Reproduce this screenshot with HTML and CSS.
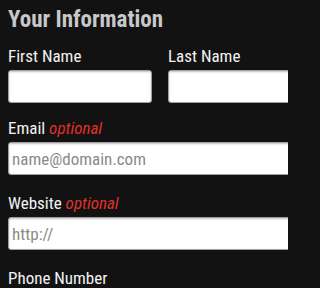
FILE: index.html
```html
<!DOCTYPE html>
<html>
<head>
<meta charset="utf-8">
<link rel="stylesheet" href="styles.css">
</head>
<body>
<div class="page">
<form class="form">
  <h2 class="title">Your Information</h2>
  <div class="row">
    <div class="field">
      <label class="label">First Name</label>
      <input class="input" type="text">
    </div>
    <div class="field">
      <label class="label">Last Name</label>
      <input class="input" type="text">
    </div>
  </div>
  <div class="field field-wide field-first">
    <label class="label">Email <span class="opt">optional</span></label>
    <input class="input" type="text" placeholder="name@domain.com">
  </div>
  <div class="field field-wide">
    <label class="label">Website <span class="opt">optional</span></label>
    <input class="input" type="text" placeholder="http://">
  </div>
  <div class="field field-wide">
    <label class="label">Phone Number</label>
  </div>
</form>
</div>
</body>
</html>
```
FILE: styles.css
```css
html, body {
  margin: 0;
  padding: 0;
  background: #121212;
}
.page {
  width: 288px;
  height: 288px;
  overflow: hidden;
}
.form {
  padding: 6px 0 0 8px;
  width: 320px;
  font-family: Roboto, sans-serif;
  font-stretch: condensed;
}
.title {
  margin: 0;
  font-size: 23px;
  line-height: 28px;
  font-weight: 700;
  color: #c8c8c8;
  white-space: nowrap;
}
.row {
  display: flex;
  gap: 16px;
  margin-top: 12px;
}
.field {
  display: flex;
  flex-direction: column;
  gap: 4px;
}
.row .field {
  width: 144px;
}
.field-wide {
  width: 310px;
  margin-top: 18px;
}
.field-first {
  margin-top: 15px;
}
.label {
  font-size: 17px;
  line-height: 20px;
  color: #f2f2f2;
  white-space: nowrap;
}
.opt {
  color: #e0302a;
  font-style: italic;
}
.input {
  box-sizing: border-box;
  height: 33px;
  width: 100%;
  margin: 0;
  border: 1px solid #a0a0a0;
  border-radius: 3px;
  background: #fff;
  padding: 0 3px;
  font-family: Roboto, sans-serif;
  font-stretch: condensed;
  font-size: 17px;
  color: #333;
  box-shadow: inset 0 1px 2px rgba(0,0,0,0.25);
}
.input::placeholder {
  color: #8a8a8a;
}
```
